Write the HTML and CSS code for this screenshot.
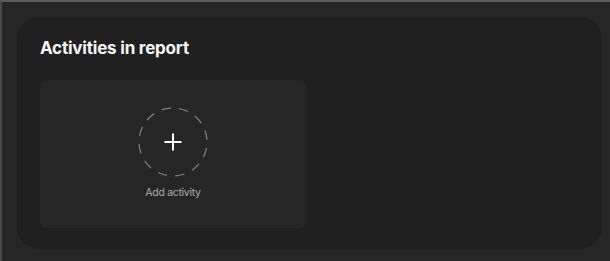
FILE: index.html
```html
<!DOCTYPE html>
<html lang="en">
<head>
  <meta charset="UTF-8" />
  <meta name="viewport" content="width=device-width, initial-scale=1.0" />
  <title>Activities in report</title>
  <link rel="stylesheet" href="styles.css">
</head>
<body>
  <div class="panel">
    <h2>Activities in report</h2>

    <div class="activities">
      <button class="add-card">
        <svg class="add-circle" width="70" height="70" viewBox="0 0 70 70">
          <circle cx="35" cy="35" r="34" fill="none" stroke="#7c7c7c" stroke-width="1.3" stroke-dasharray="9.5 8.3" transform="rotate(-80 35 35)" />
          <path d="M35 26.5v17M26.5 35h17" stroke="#fff" stroke-width="2" />
        </svg>
        <span class="add-label">Add activity</span>
      </button>
    </div>
  </div>
</body>
</html>
```

FILE: styles.css
```css
html { background: #262626; }
body {
  margin: 0;
  height: 261px;
  box-sizing: border-box;
  padding: 17px 8px 12px 17px;
  border-top: 2px solid #5c5c5c;
  border-left: 2px solid #4a4a4a;
  font-family: Inter, "Liberation Sans", sans-serif;
}
.panel {
  height: 232px;
  box-sizing: border-box;
  margin-top: -2px;
  margin-left: -2px;
  padding: 20px 23px 21px 23px;
  background: #202020;
  border-radius: 22px;
}
.panel h2 {
  margin: 0 0 21px 0;
  font-size: 17px;
  line-height: 22px;
  font-weight: 700;
  color: #f5f5f5;
  letter-spacing: -0.2px;
}
.activities { display: grid; grid-template-columns: 266px; }
.add-card {
  height: 148px;
  display: flex;
  flex-direction: column;
  align-items: center;
  padding: 27px 0 0 0;
  background: #262626;
  border: none;
  border-radius: 6px;
  cursor: pointer;
  font-family: inherit;
}
.add-circle { display: block; }
.add-label {
  margin-top: 9px;
  font-size: 10.5px;
  line-height: 14px;
  letter-spacing: -0.3px;
  color: #ababab;
}
```
